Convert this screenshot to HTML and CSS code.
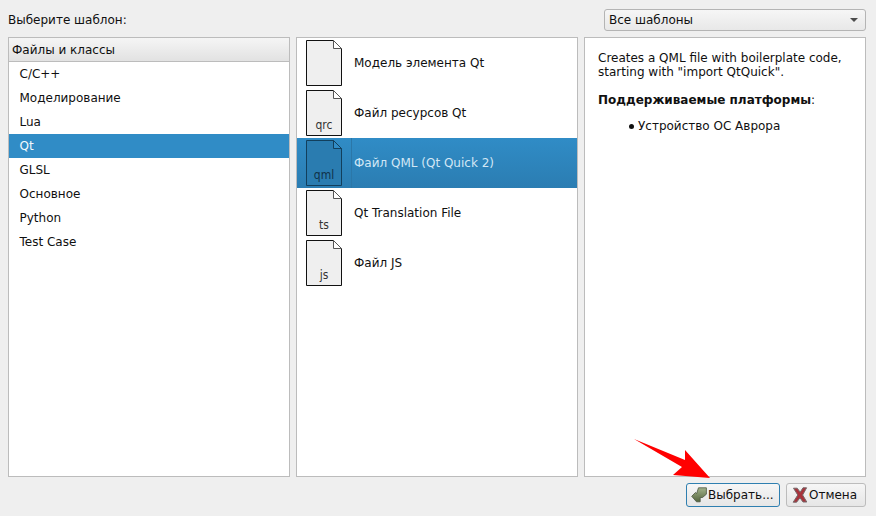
FILE: index.html
```html
<!DOCTYPE html>
<html lang="ru">
<head>
<meta charset="utf-8">
<title>Выберите шаблон</title>
<link rel="stylesheet" href="styles.css">
</head>
<body>
<div class="dialog">
  <div class="top">
    <span class="top-label">Выберите шаблон:</span>
    <div class="combo"><span>Все шаблоны</span><i class="combo-arrow"></i></div>
  </div>
  <div class="panels">
    <div class="panel">
      <div class="panel-head">Файлы и классы</div>
      <div class="cat">C/C++</div>
      <div class="cat">Моделирование</div>
      <div class="cat">Lua</div>
      <div class="cat cat-on">Qt</div>
      <div class="cat">GLSL</div>
      <div class="cat">Основное</div>
      <div class="cat">Python</div>
      <div class="cat">Test Case</div>
    </div>
    <div class="panel">
      <div class="file">
        <span class="doc"><svg class="doc-svg" width="36" height="46" viewBox="0 0 36 46"><path class="doc-body" d="M.5.5H27.5L35.5 8.5V45.5H.5Z"/><path class="doc-fold" d="M27.5.5V8.5H35.5Z"/></svg><span class="doc-ext"></span></span>
        <span class="file-name">Модель элемента Qt</span>
      </div>
      <div class="file">
        <span class="doc"><svg class="doc-svg" width="36" height="46" viewBox="0 0 36 46"><path class="doc-body" d="M.5.5H27.5L35.5 8.5V45.5H.5Z"/><path class="doc-fold" d="M27.5.5V8.5H35.5Z"/></svg><span class="doc-ext">qrc</span></span>
        <span class="file-name">Файл ресурсов Qt</span>
      </div>
      <div class="file file-on">
        <span class="doc"><svg class="doc-svg" width="36" height="46" viewBox="0 0 36 46"><path class="doc-body" d="M.5.5H27.5L35.5 8.5V45.5H.5Z"/><path class="doc-fold" d="M27.5.5V8.5H35.5Z"/></svg><span class="doc-ext">qml</span></span>
        <span class="file-name">Файл QML (Qt Quick 2)</span>
      </div>
      <div class="file">
        <span class="doc"><svg class="doc-svg" width="36" height="46" viewBox="0 0 36 46"><path class="doc-body" d="M.5.5H27.5L35.5 8.5V45.5H.5Z"/><path class="doc-fold" d="M27.5.5V8.5H35.5Z"/></svg><span class="doc-ext">ts</span></span>
        <span class="file-name">Qt Translation File</span>
      </div>
      <div class="file">
        <span class="doc"><svg class="doc-svg" width="36" height="46" viewBox="0 0 36 46"><path class="doc-body" d="M.5.5H27.5L35.5 8.5V45.5H.5Z"/><path class="doc-fold" d="M27.5.5V8.5H35.5Z"/></svg><span class="doc-ext">js</span></span>
        <span class="file-name">Файл JS</span>
      </div>
    </div>
    <div class="panel panel-info">
      <p class="info-text">Creates a QML file with boilerplate code,<br>starting with "import QtQuick".</p>
      <p class="info-title"><b>Поддерживаемые платформы</b>:</p>
      <ul class="info-list"><li>Устройство ОС Аврора</li></ul>
    </div>
  </div>
  <div class="actions">
    <div class="btn btn-default">
      <svg class="btn-icon" width="16" height="16" viewBox="0 0 16 16"><defs><linearGradient id="ok" x1="0" y1="0" x2="0" y2="1"><stop offset="0" stop-color="#a3b38a"/><stop offset="1" stop-color="#55653e"/></linearGradient></defs><path d="M.7 9.3L4.5 5.5L5.6 6.6L7.5.8H15.4V7.2L11.5 10.5H9.2V14.8H5.5Z" fill="url(#ok)" stroke="#4b5640" stroke-width=".8" stroke-linejoin="round"/></svg>
      <span>Выбрать...</span>
    </div>
    <div class="btn">
      <svg class="btn-icon" width="16" height="16" viewBox="0 0 16 16"><path d="M1.5 1.2H5.2L8.2 5.2L11 .8H14.6L10.6 8L14.8 15H11L8 10.8L4.6 15.2H1.2L5.8 8Z" fill="#a8333b" stroke="#75686a" stroke-width="1" stroke-linejoin="round"/></svg>
      <span>Отмена</span>
    </div>
  </div>
  <svg class="pointer" width="78" height="40" viewBox="0 0 78 40"><path d="M0 0L51 21L51 11L76 39L39 36L48 28Z" fill="#ff0000"/></svg>
</div>
</body>
</html>
```
FILE: styles.css
```css
* { box-sizing: border-box; }
html, body { margin: 0; padding: 0; }
body {
  width: 876px;
  height: 516px;
  overflow: hidden;
  background: #efefef;
  color: #101010;
  font-family: "DejaVu Sans", sans-serif;
  font-size: 12px;
}
.dialog {
  position: relative;
  width: 876px;
  height: 516px;
  padding: 9px 10px 9px 8px;
  display: flex;
  flex-direction: column;
}
.top {
  height: 22px;
  display: flex;
  align-items: center;
  justify-content: space-between;
}
.combo {
  width: 262px;
  height: 22px;
  padding: 0 7px 0 4px;
  display: flex;
  align-items: center;
  justify-content: space-between;
  border: 1px solid #b4b4b4;
  border-radius: 3px;
  background: linear-gradient(#f6f6f6, #e8e8e8);
}
.combo-arrow {
  width: 0;
  height: 0;
  border-left: 4px solid transparent;
  border-right: 4px solid transparent;
  border-top: 4px solid #4c4c4c;
}
.panels {
  margin-top: 6px;
  height: 440px;
  display: grid;
  grid-template-columns: 282px 282px 282px;
  column-gap: 6px;
}
.panel {
  background: #fff;
  border: 1px solid #bcbcbc;
  overflow: hidden;
}
.panel-head {
  height: 24px;
  padding-left: 3px;
  display: flex;
  align-items: center;
  border-bottom: 1px solid #bcbcbc;
  background: linear-gradient(#f5f5f5, #e2e2e2);
}
.cat {
  height: 24px;
  padding-left: 10.5px;
  display: flex;
  align-items: center;
}
.cat-on {
  background: #308cc6;
  color: #f2f8fc;
}
.file {
  height: 50px;
  padding-left: 9px;
  display: flex;
  align-items: center;
}
.doc {
  position: relative;
  width: 36px;
  height: 46px;
  flex: none;
  margin-right: 12px;
}
.doc-svg { display: block; }
.doc-body { fill: #efefef; stroke: #111; stroke-width: 1; }
.doc-fold { fill: #fff; stroke: #555; stroke-width: 1; }
.doc-ext {
  position: absolute;
  left: 0;
  right: 0;
  bottom: 4px;
  text-align: center;
  font-size: 12px;
  font-stretch: condensed;
  line-height: 14px;
  color: #333;
}
.file-on {
  background: linear-gradient(#308cc6, #2b7db2);
  color: #d2e7f5;
}
.file-on .doc { margin-right: 9px; }
.file-on .doc-body { fill: #2a7cb0; stroke: #123f5c; }
.file-on .doc-fold { fill: #308cc6; stroke: #123f5c; }
.file-on .doc-ext { color: #10324a; }
.file-on .file-name {
  align-self: stretch;
  display: flex;
  align-items: center;
  padding-left: 2px;
  border-left: 1px solid #2b77a8;
}
.panel-info {
  padding: 13px 13px;
  line-height: 14px;
}
.info-text { margin: 0; }
.info-title { margin: 14px 0 0; }
.info-list {
  margin: 12px 0 0;
  padding: 0 0 0 40px;
  list-style: none;
}
.info-list li { position: relative; }
.info-list li::before {
  content: "";
  position: absolute;
  left: -9px;
  top: 5px;
  width: 5px;
  height: 5px;
  border-radius: 50%;
  background: #101010;
}
.actions {
  margin-top: 6px;
  height: 24px;
  display: flex;
  justify-content: flex-end;
  gap: 6px;
}
.btn {
  width: 80px;
  height: 24px;
  padding: 0 0 0 5px;
  display: flex;
  align-items: center;
  gap: 1px;
  border: 1px solid #bcbcbc;
  border-radius: 3px;
  background: linear-gradient(#f6f6f6, #e6e6e6);
}
.btn-icon { flex: none; }
.btn-default {
  width: 94px;
  padding-left: 4px;
  border-color: #2f7fb0;
}
.pointer {
  position: absolute;
  left: 634px;
  top: 439px;
}
```
